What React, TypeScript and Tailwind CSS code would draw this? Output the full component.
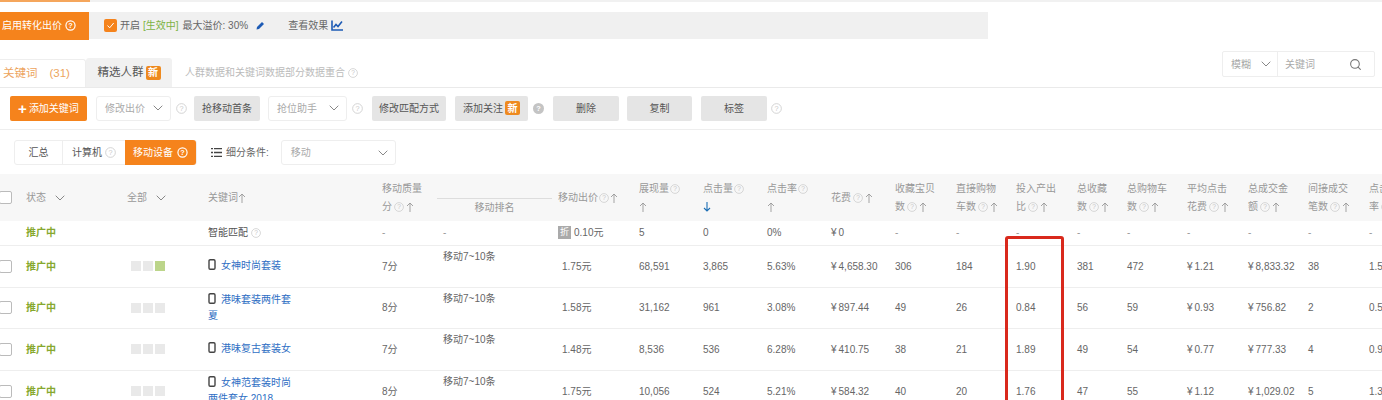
import { Search } from 'lucide-react';
import type { ReactNode } from 'react';

const FONT = '"Liberation Sans", "Noto Sans CJK SC", sans-serif';

function Help({ solid = false, white = false, size = 10 }: { solid?: boolean; white?: boolean; size?: number }) {
  if (solid || white) {
    return (
      <svg width={size} height={size} viewBox="0 0 12 12" className="inline-block shrink-0">
        <circle cx="6" cy="6" r={white ? 5 : 6} fill={white ? 'none' : '#c4c4c4'} stroke={white ? '#fff' : 'none'} strokeWidth="1.3" />
        <text x="6" y="9" textAnchor="middle" fontSize="8" fontWeight="700" fill="#fff">?</text>
      </svg>
    );
  }
  return (
    <svg width={size} height={size} viewBox="0 0 12 12" className="inline-block shrink-0">
      <circle cx="6" cy="6" r="5.3" fill="none" stroke="#d0d0d0" strokeWidth="1" />
      <text x="6" y="8.8" textAnchor="middle" fontSize="8" fill="#c8c8c8">?</text>
    </svg>
  );
}

function NewBadge() {
  return (
    <span className="ml-[2px] inline-flex h-[14px] w-[15px] items-center justify-center rounded-[2px] bg-[#ee8a1f] text-[10px] font-bold text-white">
      新
    </span>
  );
}

function Up() {
  return (
    <svg width="8" height="10" viewBox="0 0 8 10" className="inline-block shrink-0">
      <path d="M4 10 V1 M1 4 L4 1 L7 4" fill="none" stroke="#999" strokeWidth="0.9" />
    </svg>
  );
}

function Down() {
  return (
    <svg width="8" height="10" viewBox="0 0 8 10" className="inline-block shrink-0">
      <path d="M4 0 V9 M1 6 L4 9 L7 6" fill="none" stroke="#1d6fb5" strokeWidth="1.1" />
    </svg>
  );
}

function Chevron() {
  return (
    <svg width="10" height="6" viewBox="0 0 10 6" className="shrink-0">
      <path d="M0.7 0.7 L5 5 L9.3 0.7" fill="none" stroke="#888" strokeWidth="1" />
    </svg>
  );
}

function Check({ className = '' }: { className?: string }) {
  return <span className={`-ml-px block h-[13px] w-[13px] rounded-[2px] border border-[#bbb] bg-white ${className}`} />;
}

function SelectBox({ label, className }: { label: string; className: string }) {
  return (
    <div className={`flex h-[25px] items-center justify-between rounded-[3px] border border-[#eee] bg-white text-[10px] text-[#aaa] ${className}`}>
      <span>{label}</span>
      <Chevron />
    </div>
  );
}

function GrayBtn({ className, children }: { className: string; children: ReactNode }) {
  return (
    <div className={`flex h-[25px] items-center justify-center rounded-[2px] bg-[#e5e5e5] text-[10px] text-[#555] ${className}`}>
      {children}
    </div>
  );
}

// the yen sign sits a little apart from the digits
function Val({ x }: { x: string }) {
  if (!x.startsWith('¥')) return <>{x}</>;
  return (
    <>
      <span className="mr-[2px]">¥</span>
      {x.slice(1)}
    </>
  );
}

const COLS = [26, 101, 81, 174, 55, 121, 81, 64, 64, 64, 64, 61, 60, 61, 50, 60, 61, 60, 61, 60];

function Two({ a, b }: { a: ReactNode; b: ReactNode }) {
  return (
    <div className="leading-[18px]">
      <div className="flex items-center gap-[1px] whitespace-nowrap">{a}</div>
      <div className="flex h-[18px] items-center gap-[2px] whitespace-nowrap">{b}</div>
    </div>
  );
}

const TWO_LINE = [
  ['收藏宝贝', '数'],
  ['直接购物', '车数'],
  ['投入产出', '比'],
  ['总收藏', '数'],
  ['总购物车', '数'],
  ['平均点击', '花费'],
  ['总成交金', '额'],
  ['间接成交', '笔数'],
  ['点击转化', '率'],
];

const ROWS = [
  { on: true, name: '女神时尚套装', score: '7分', bid: '1.75元', v: ['68,591', '3,865', '5.63%', '¥4,658.30', '306', '184', '1.90', '381', '472', '¥1.21', '¥8,833.32', '38', '1.52%'], h: 'h-[42px]' },
  { on: false, name: '港味套装两件套夏', score: '8分', bid: '1.58元', v: ['31,162', '961', '3.08%', '¥897.44', '49', '26', '0.84', '56', '59', '¥0.93', '¥756.82', '2', '0.52%'], h: 'h-[41px]' },
  { on: false, name: '港味复古套装女', score: '7分', bid: '1.48元', v: ['8,536', '536', '6.28%', '¥410.75', '38', '21', '1.89', '49', '54', '¥0.77', '¥777.33', '4', '0.91%'], h: 'h-[42px]' },
  { on: false, name: '女神范套装时尚两件套女 2018', score: '8分', bid: '1.75元', v: ['10,056', '524', '5.21%', '¥584.32', '40', '20', '1.76', '47', '55', '¥1.12', '¥1,029.02', '5', '1.31%'], h: 'h-[42px]' },
];

function Phone() {
  return (
    <svg width="8" height="11" viewBox="0 0 8 11" className="mr-[5px] inline-block align-[-1px]">
      <rect x="1" y="0.7" width="6" height="9.6" rx="1.2" fill="none" stroke="#444" strokeWidth="1.4" />
    </svg>
  );
}

export default function App() {
  return (
    <div className="h-[400px] w-[1382px] overflow-hidden bg-white text-[10px] text-[#666]" style={{ fontFamily: FONT }}>
      <div className="h-[2px] bg-[#f1f1f1]">
        <div className="h-[2px] w-[90px] bg-[#f5a65c]" />
      </div>

      <div className="ml-0 mt-[10px] flex h-[27px] w-[988px] items-center bg-[#f0f0f0]">
        <div className="flex h-[28px] w-[89px] items-center gap-[3px] bg-[#f5831c] pl-[2px] text-[10px] text-white">
          启用转化出价
          <Help white size={11} />
        </div>
        <span className="ml-[15px] flex h-[13px] w-[13px] items-center justify-center rounded-[2px] bg-[#f5831c]">
          <svg width="9" height="9" viewBox="0 0 9 9">
            <path d="M1.5 4.5 L3.7 6.8 L7.7 2" fill="none" stroke="#fff" strokeWidth="1" />
          </svg>
        </span>
        <span className="ml-[3px]">开启</span>
        <span className="ml-[3px] text-[#7cb342]">[生效中]</span>
        <span className="ml-[4px]">最大溢价: 30%</span>
        <svg width="9" height="9" viewBox="0 0 9 9" className="ml-[8px]">
          <path d="M0.5 8.5 L1 6 L6 1 L8 3 L3 8 Z" fill="#1d5bb5" />
        </svg>
        <span className="ml-[23px]">查看效果</span>
        <svg width="12" height="11" viewBox="0 0 12 11" className="ml-[3px]">
          <path d="M1 0.5 V10 H12" fill="none" stroke="#1d5bb5" strokeWidth="1.6" />
          <path d="M2.5 7.5 L5 4.5 L7 6.5 L11 1.5" fill="none" stroke="#1d5bb5" strokeWidth="1.6" />
        </svg>
      </div>

      <div className="mt-[13px] flex h-[36px] items-end border-b border-[#eaeaea]">
        <div className="-ml-px flex h-[28px] w-[87px] items-center gap-[12px] rounded-tr-[3px] border-r border-t border-[#eee] bg-white pl-[4px] text-[11.5px] text-[#eda45e]">
          <span>关键词</span>
          <span>(31)</span>
        </div>
        <div className="flex h-[29px] w-[86px] items-center justify-center rounded-t-[3px] bg-[#f1f1f1] text-[11.5px] text-[#555]">
          精选人群
          <NewBadge />
        </div>
        <div className="ml-[13px] flex h-[29px] items-center gap-[3px] text-[10px] text-[#bbb]">
          人群数据和关键词数据部分数据重合
          <Help />
        </div>
        <div className="mb-[10px] ml-auto mr-[7px] flex h-[26px] w-[153px] rounded-[2px] border border-[#eee] text-[10px] text-[#aaa]">
          <div className="flex w-[55px] items-center justify-between border-r border-[#eee] pl-[8px] pr-[6px]">
            模糊
            <Chevron />
          </div>
          <div className="flex flex-1 items-center justify-between pl-[7px] pr-[12px]">
            关键词
            <Search size={13} strokeWidth={2} className="text-[#777]" />
          </div>
        </div>
      </div>

      <div className="flex h-[42px] items-center border-b border-[#eee] pb-[9px] pl-[10px] pt-[8px]">
        <div className="flex h-[25px] w-[77px] items-center justify-center gap-[2px] rounded-[2px] bg-[#f5831c] text-[10px] text-white">
          <span className="text-[15px] font-bold leading-none">+</span>
          添加关键词
        </div>
        <SelectBox label="修改出价" className="ml-[9px] w-[75px] pl-[8px] pr-[7px]" />
        <span className="ml-[5px]"><Help size={11} /></span>
        <GrayBtn className="ml-[7px] w-[66px]">抢移动首条</GrayBtn>
        <SelectBox label="抢位助手" className="ml-[8px] w-[79px] pl-[8px] pr-[7px]" />
        <span className="ml-[5px]"><Help size={11} /></span>
        <GrayBtn className="ml-[9px] w-[74px]">修改匹配方式</GrayBtn>
        <GrayBtn className="ml-[9px] w-[73px]">
          添加关注
          <NewBadge />
        </GrayBtn>
        <span className="ml-[5px]"><Help solid size={11} /></span>
        <GrayBtn className="ml-[9px] w-[66px]">删除</GrayBtn>
        <GrayBtn className="ml-[8px] w-[65px]">复制</GrayBtn>
        <GrayBtn className="ml-[9px] w-[66px]">标签</GrayBtn>
        <span className="ml-[4px]"><Help size={11} /></span>
      </div>

      <div className="flex h-[44px] items-center pb-[9px] pl-[14px] pt-[10px]">
        <div className="flex h-[25px] w-[183px] rounded-[3px] border border-[#eee] text-[10px] text-[#555]">
          <div className="flex w-[48px] items-center justify-center border-r border-[#eee]">汇总</div>
          <div className="flex w-[62px] items-center justify-center gap-[3px]">
            计算机
            <Help size={11} />
          </div>
          <div className="-my-px flex flex-1 items-center justify-center gap-[4px] rounded-r-[3px] bg-[#f5831c] text-white">
            移动设备
            <Help white size={11} />
          </div>
        </div>
        <svg width="11" height="9" viewBox="0 0 11 9" className="ml-[14px]">
          <path d="M0 0.5 H2 M3 0.5 H11 M0 4.5 H2 M3 4.5 H11 M0 8.5 H2 M3 8.5 H11" stroke="#444" strokeWidth="1.6" />
        </svg>
        <span className="ml-[4px]">细分条件:</span>
        <SelectBox label="移动" className="ml-[12px] w-[115px] pl-[9px] pr-[7px]" />
      </div>

      <div className="relative">
        <table className="w-[1429px] table-fixed border-collapse text-left text-[10px]">
          <colgroup>
            {COLS.map((w, i) => (
              <col key={i} style={{ width: w }} />
            ))}
          </colgroup>
          <thead>
            <tr className="h-[47px] bg-[#f7f7f7] text-[#999]">
              <th className="font-normal"><Check /></th>
              <th className="font-normal">
                <span className="flex items-center gap-[9px]">
                  状态
                  <Chevron />
                </span>
              </th>
              <th className="font-normal">
                <span className="flex items-center gap-[9px]">
                  全部
                  <Chevron />
                </span>
              </th>
              <th className="font-normal">
                <span className="flex items-center">
                  关键词
                  <Up />
                </span>
              </th>
              <th className="font-normal">
                <Two a="移动质量" b={<>分<Help /><Up /></>} />
              </th>
              <th className="align-top font-normal">
                <div className="mt-[24px] w-[115px] border-t border-[#ddd] text-center leading-[18px]">移动排名</div>
              </th>
              <th className="font-normal">
                <span className="flex items-center gap-[1px]">
                  移动出价
                  <Help />
                  <Up />
                </span>
              </th>
              <th className="font-normal">
                <Two a={<>展现量<Help /></>} b={<Up />} />
              </th>
              <th className="font-normal">
                <Two a={<>点击量<Help /></>} b={<Down />} />
              </th>
              <th className="font-normal">
                <Two a={<>点击率<Help /></>} b={<Up />} />
              </th>
              <th className="font-normal">
                <span className="flex items-center gap-[2px]">
                  花费
                  <Help />
                  <Up />
                </span>
              </th>
              {TWO_LINE.map(([a, b]) => (
                <th key={a} className="font-normal">
                  <Two a={a} b={<>{b}<Help /><Up /></>} />
                </th>
              ))}
            </tr>
          </thead>
          <tbody>
            <tr className="h-[24px] border-b border-[#eee]">
              <td />
              <td className="font-bold text-[#86a82e]">推广中</td>
              <td />
              <td className="text-[#555]">
                <span className="flex items-center gap-[3px]">
                  智能匹配
                  <Help />
                </span>
              </td>
              <td className="text-[#999]">-</td>
              <td className="pl-[6px] text-[#999]">-</td>
              <td>
                <span className="flex items-center gap-[3px]">
                  <span className="flex h-[13px] w-[13px] items-center justify-center bg-[#aaa] text-[9px] text-white">折</span>
                  0.10元
                </span>
              </td>
              <td>5</td>
              <td>0</td>
              <td>0%</td>
              <td><Val x="¥0" /></td>
              {TWO_LINE.map(([a]) => (
                <td key={a} className="text-[#999]">-</td>
              ))}
            </tr>
            {ROWS.map((r) => (
              <tr key={r.name} className={`${r.h} border-b border-[#eee]`}>
                <td><Check /></td>
                <td className="font-bold text-[#86a82e]">推广中</td>
                <td>
                  <span className="flex gap-[2px] pl-[4px]">
                    <span className="h-[10px] w-[10px] bg-[#e9e9e9]" />
                    <span className="h-[10px] w-[10px] bg-[#e9e9e9]" />
                    <span className={`h-[10px] w-[10px] ${r.on ? 'bg-[#bcd58a]' : 'bg-[#e9e9e9]'}`} />
                  </span>
                </td>
                <td>
                  <div className="h-[32px] w-[88px] overflow-visible leading-[16px] text-[#2f6fc4] [display:flow-root]">
                    <div className={r.name.length > 7 ? '' : 'pt-[8px]'}>
                      <Phone />
                      {r.name}
                    </div>
                  </div>
                </td>
                <td>{r.score}</td>
                <td className="pl-[6px] pt-[3px] align-top leading-[16px]">移动7~10条</td>
                <td className="pl-[4px]">{r.bid}</td>
                {r.v.map((x, i) => (
                  <td key={i} className="whitespace-nowrap"><Val x={x} /></td>
                ))}
              </tr>
            ))}
          </tbody>
        </table>
        <div className="absolute left-[1005px] top-[62px] h-[200px] w-[59px] rounded-t-[3px] border-[3px] border-[#d9291c]" />
      </div>
    </div>
  );
}
